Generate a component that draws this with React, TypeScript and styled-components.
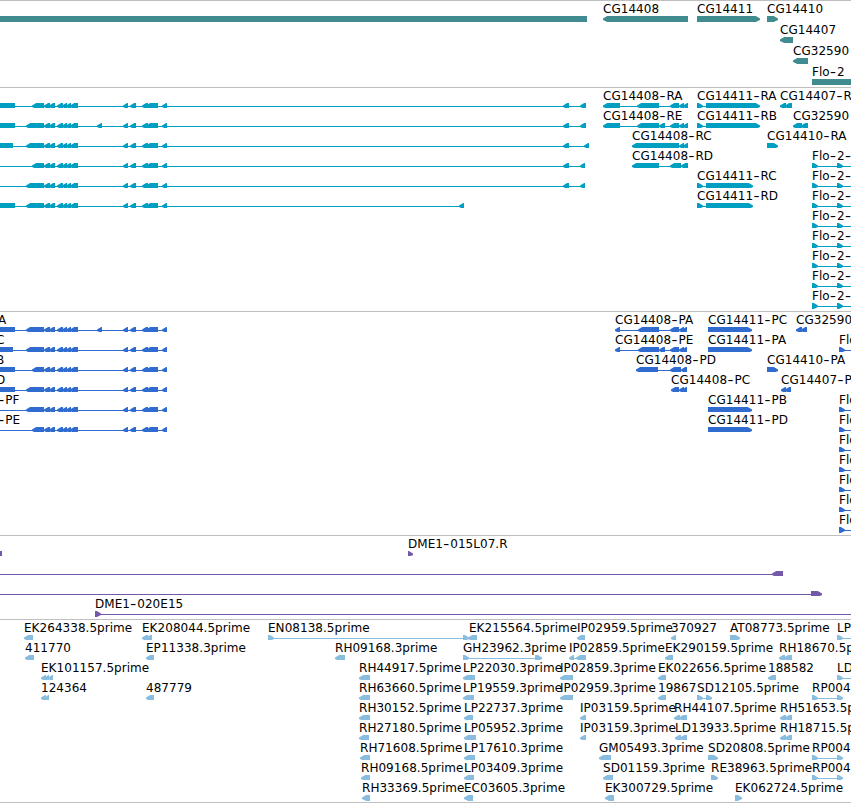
import React from 'react';
import styled, { createGlobalStyle } from 'styled-components';

type Strand = 'left' | 'right' | 'none'
type Block = [number, number]

interface IFeature {
    label?: string
    labelX?: number
    strand: Strand
    blocks: Block[]
}

interface ITrack {
    name: string
    color: string
    height: number
    rowHeight: number
    rows: IFeature[][]
}

const WIDTH = 851
const HEAD = 5

const GlobalStyle = createGlobalStyle`
  body {
    margin: 0;
    background: #fff;
    overflow: hidden;
  }
`

const Browser = styled.main`
  display: flex;
  flex-direction: column;
  width: ${WIDTH}px;
  height: 803px;
  overflow: hidden;
  background: #fff;
`

const TrackPanel = styled.section<{ $height: number; $color: string }>`
  box-sizing: border-box;
  flex: none;
  height: ${props => props.$height}px;
  border-top: 1px solid #bfbfbf;
  color: ${props => props.$color};
`

const TrackRow = styled.svg`
  display: block;
  overflow: hidden;
  fill: currentColor;
`

const Label = styled.text`
  font-family: 'DejaVu Sans', sans-serif;
  font-size: 12px;
  letter-spacing: 0.04px;
  fill: #000;
  white-space: pre;
`

// wider than the hyphen of the label font
const Hyphen = styled.tspan`
  font-family: Inter, sans-serif;
  font-size: 14px;
  letter-spacing: 0.8px;
  baseline-shift: -1px;
`

const BottomRule = styled.div`
  flex: none;
  height: 1px;
  background: #bfbfbf;
`

const left = (label: string, ...blocks: Block[]): IFeature => ({ label, strand: 'left', blocks })
const right = (label: string, ...blocks: Block[]): IFeature => ({ label, strand: 'right', blocks })

// exons shared by every transcript of the long gene on the left side
const shared: Block[] = [
    [44, 50], [49, 55], [57, 63], [62, 67], [66, 71], [70, 78],
    [123, 128], [130, 136], [142, 148], [146, 158], [162, 167],
]

const longGene = (end: number | null, first: number, extra: Block[] = [], label = '', labelX = 0): IFeature => ({
    label,
    labelX,
    strand: 'left',
    blocks: [end === null ? [-30, -20] : [-30, end], [first, 44], ...shared, ...extra],
})

const floTranscript = (): IFeature => right('Flo-2-', [812, 818], [837, 843], [870, 880])
const floProtein = (): IFeature => right('Flo', [839, 845], [870, 880])

const tracks: ITrack[] = [
    {
        name: 'genes',
        color: '#408c91',
        height: 87,
        rowHeight: 21,
        rows: [
            [
                { strand: 'none', blocks: [[0, 587]] },
                left('CG14408', [603, 688]),
                right('CG14411', [697, 760]),
                right('CG14410', [767, 778]),
            ],
            [left('CG14407', [780, 793])],
            [left('CG32590', [793, 808])],
            [{ label: 'Flo-2', strand: 'none', blocks: [[812, 851]] }],
        ],
    },
    {
        name: 'transcripts',
        color: '#009fc2',
        height: 224,
        rowHeight: 20,
        rows: [
            [
                longGene(15, 32, [[563, 569], [580, 586]]),
                left('CG14408-RA', [603, 620], [637, 659], [670, 679], [679, 684], [683, 688]),
                right('CG14411-RA', [697, 703], [706, 760]),
                left('CG14407-R', [780, 786], [785, 792]),
            ],
            [
                longGene(15, 26, [[97, 102], [563, 569], [580, 586]]),
                left('CG14408-RE', [603, 620], [637, 659], [659, 665], [670, 679], [679, 684], [683, 688]),
                right('CG14411-RB', [697, 703], [706, 760]),
                left('CG32590', [793, 802], [801, 808]),
            ],
            [
                longGene(13, 26, [[563, 569], [584, 589]]),
                left('CG14408-RC', [632, 679], [679, 684], [683, 688]),
                right('CG14410-RA', [767, 778]),
            ],
            [
                longGene(null, 32, [[563, 569], [580, 585]]),
                left('CG14408-RD', [632, 659], [670, 681], [681, 688]),
                floTranscript(),
            ],
            [
                longGene(null, 26, [[563, 569], [580, 585]]),
                right('CG14411-RC', [697, 703], [706, 753]),
                floTranscript(),
            ],
            [
                longGene(15, 26, [[459, 464]]),
                right('CG14411-RD', [697, 703], [706, 753]),
                floTranscript(),
            ],
            [floTranscript()],
            [floTranscript()],
            [floTranscript()],
            [floTranscript()],
            [floTranscript()],
        ],
    },
    {
        name: 'proteins',
        color: '#306ccf',
        height: 224,
        rowHeight: 20,
        rows: [
            [
                longGene(15, 26, [[97, 102]], 'A', -2),
                left('CG14408-PA', [615, 620], [638, 659], [670, 679], [679, 684], [682, 687]),
                right('CG14411-PC', [708, 752]),
                left('CG32590', [796, 802], [801, 807]),
            ],
            [
                longGene(13, 26, [], 'C', -4),
                left('CG14408-PE', [615, 620], [638, 659], [659, 665], [670, 679], [679, 684], [682, 687]),
                right('CG14411-PA', [708, 752]),
                floProtein(),
            ],
            [
                longGene(15, 32, [], 'B', -4),
                left('CG14408-PD', [636, 658], [670, 681], [681, 687]),
                right('CG14410-PA', [767, 778]),
            ],
            [
                longGene(15, 26, [], 'D', -4),
                left('CG14408-PC', [671, 679], [679, 684], [682, 687]),
                left('CG14407-P', [781, 786], [785, 791]),
            ],
            [longGene(null, 26, [], '-PF', -2), right('CG14411-PB', [708, 752]), floProtein()],
            [longGene(null, 32, [], '-PE', -2), right('CG14411-PD', [708, 752]), floProtein()],
            [floProtein()],
            [floProtein()],
            [floProtein()],
            [floProtein()],
            [floProtein()],
        ],
    },
    {
        name: 'clones',
        color: '#7459a8',
        height: 84,
        rowHeight: 20,
        rows: [
            [{ strand: 'none', blocks: [[0, 2]] }, right('DME1-015L07.R', [408, 413])],
            [left('', [-30, -20], [772, 783])],
            [right('', [-30, -20], [811, 822])],
            [right('DME1-020E15', [95, 101], [870, 880])],
        ],
    },
    {
        name: 'ests',
        color: '#88bde0',
        height: 183,
        rowHeight: 20,
        rows: [
            [
                left('EK264338.5prime', [24, 33]),
                left('EK208044.5prime', [142, 148], [146, 152]),
                right('EN08138.5prime', [268, 274], [463, 469]),
                { ...left('EK215564.5prime', [468, 477]), labelX: 469 },
                left('IP02959.5prime', [577, 585]),
                left('370927', [671, 676]),
                right('AT08773.5prime', [730, 740]),
                right('LP', [837, 843], [870, 880]),
            ],
            [
                left('411770', [25, 34]),
                left('EP11338.3prime', [146, 154]),
                left('RH09168.3prime', [335, 345]),
                right('GH23962.3prime', [463, 469], [535, 542]),
                left('IP02859.5prime', [569, 574], [576, 586]),
                left('EK290159.5prime', [665, 673]),
                left('RH18670.5p', [779, 785], [784, 792]),
            ],
            [
                left('EK101157.5prime', [41, 46], [45, 49], [48, 53]),
                left('RH44917.5prime', [359, 370]),
                left('LP22030.3prime', [463, 475]),
                left('IP02859.3prime', [560, 573]),
                left('EK022656.5prime', [658, 666]),
                left('188582', [768, 776]),
                right('LD', [837, 843], [870, 880]),
            ],
            [
                left('124364', [41, 46], [45, 49]),
                left('487779', [146, 154]),
                left('RH63660.5prime', [359, 370]),
                left('LP19559.3prime', [463, 474]),
                left('IP02959.3prime', [560, 573]),
                left('19867', [658, 666]),
                right('SD12105.5prime', [697, 703], [706, 712]),
                right('RP004', [812, 818], [837, 843]),
            ],
            [
                left('RH30152.5prime', [359, 370]),
                left('LP22737.3prime', [464, 473]),
                left('IP03159.5prime', [580, 586]),
                left('RH44107.5prime', [674, 680], [679, 687]),
                left('RH51653.5p', [780, 786], [785, 792]),
            ],
            [
                left('RH27180.5prime', [359, 369]),
                left('LP05952.3prime', [464, 476]),
                left('IP03159.3prime', [580, 586]),
                left('LD13933.5prime', [675, 681], [680, 687]),
                left('RH18715.5p', [780, 786], [785, 792]),
            ],
            [
                left('RH71608.5prime', [360, 370]),
                left('LP17610.3prime', [464, 475]),
                left('GM05493.3prime', [599, 611]),
                right('SD20808.5prime', [708, 718]),
                right('RP004', [812, 818], [837, 843]),
            ],
            [
                left('RH09168.5prime', [361, 370]),
                left('LP03409.3prime', [464, 474]),
                left('SD01159.3prime', [603, 613]),
                right('RE38963.5prime', [711, 718]),
                right('RP004', [812, 818], [837, 843]),
            ],
            [
                left('RH33369.5prime', [362, 370]),
                left('EC03605.3prime', [464, 473]),
                left('EK300729.5prime', [605, 614]),
                right('EK062724.5prime', [735, 742]),
            ],
        ],
    },
]

const blockPath = ([start, end]: Block, strand: Strand) => {
    const head = Math.min(HEAD, end - start) - 0.8
    switch (strand) {
        case 'left':
            return `M${start} 17.4L${start + head} 15H${end}V21H${start + head}L${start} 18.9Z`
        case 'right':
            return `M${end} 17.4L${end - head} 15H${start}V21H${end - head}L${end} 18.9Z`
        default:
            return `M${start} 15H${end}V21H${start}Z`
    }
}

const Feature = ({ feature }: { feature: IFeature }) => {
    const { blocks, strand, label } = feature
    const sorted = [...blocks].sort((a, b) => a[0] - b[0])
    const start = sorted[0][0]
    const end = sorted[sorted.length - 1][1]
    return (
        <g>
            {sorted.length > 1 && <rect x={start + 1} y={18} width={end - start - 2} height={1} />}
            {sorted.map(block => <path key={block[0]} d={blockPath(block, strand)} />)}
            {label && (
                <Label x={feature.labelX !== undefined ? feature.labelX : start} y={12}>
                    {label.split(/(-)/).map((part, i) => part === '-' ? <Hyphen key={i}>-</Hyphen> : part)}
                </Label>
            )}
        </g>
    )
}

const Track = ({ track }: { track: ITrack }) => (
    <TrackPanel $height={track.height} $color={track.color}>
        {track.rows.map((row, i) => (
            <TrackRow key={i} width={WIDTH} height={track.rowHeight + (i === track.rows.length - 1 ? 2 : 0)}>
                {row.map((feature, j) => <Feature key={j} feature={feature} />)}
            </TrackRow>
        ))}
    </TrackPanel>
)

export default () => (
    <>
        <GlobalStyle />
        <Browser>
            {tracks.map(track => <Track key={track.name} track={track} />)}
            <BottomRule />
        </Browser>
    </>
)
